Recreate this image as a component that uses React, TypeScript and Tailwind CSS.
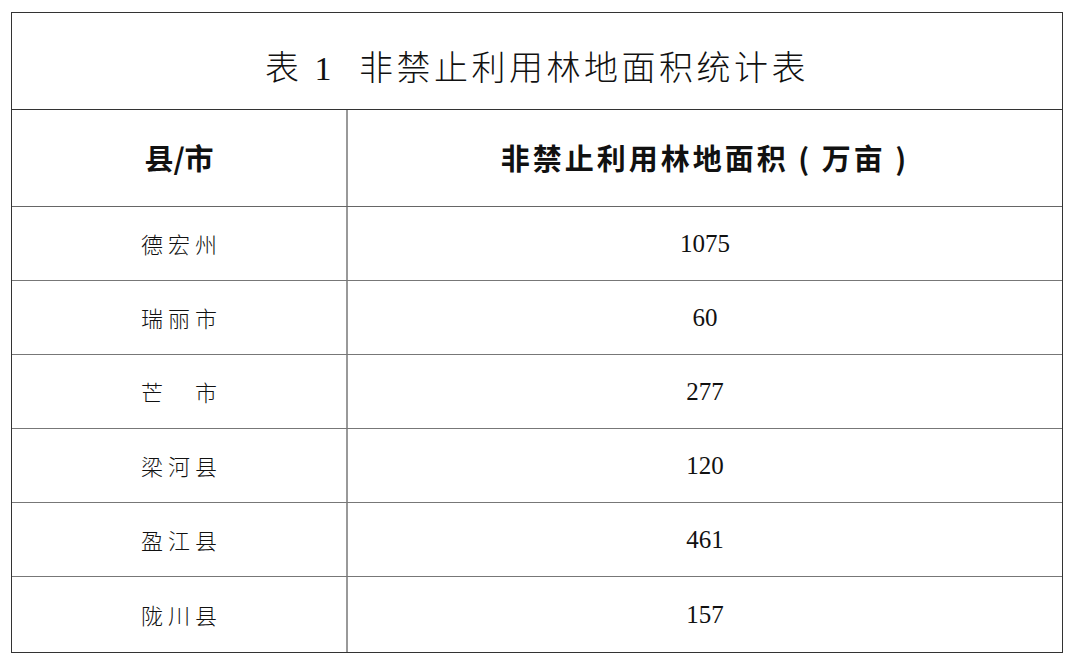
import React from "react";

const rows: { name: string; value: string }[] = [
  { name: "德宏州", value: "1075" },
  { name: "瑞丽市", value: "60" },
  { name: "芒\u3000市", value: "277" },
  { name: "梁河县", value: "120" },
  { name: "盈江县", value: "461" },
  { name: "陇川县", value: "157" },
];

const cjk = "font-['Liberation_Serif','Noto_Sans_CJK_SC',serif]";

export default function App() {
  return (
    <div className="w-[1080px] h-[672px] bg-white pt-[12px] pl-[11px]">
      <div className="w-[1052px] border-[1.5px] border-[#333]">
        {/* title */}
        <div className="h-[97px] flex items-center justify-center border-b-[1.5px] border-[#333]">
          <h1 className={`${cjk} text-[34px] font-light text-[#111] tracking-[3.5px] pt-[14px]`}>
            表 1&nbsp; 非禁止利用林地面积统计表
          </h1>
        </div>

        {/* header */}
        <div className="grid grid-cols-[336px_1fr] h-[97px] border-b-[1.5px] border-[#666]">
          <div className="flex items-center justify-center border-r-[2px] border-[#999]">
            <span className="font-['Noto_Sans_CJK_SC',sans-serif] font-bold text-[29px] text-[#111]">
              县/市
            </span>
          </div>
          <div className="flex items-center justify-center">
            <span className="font-['Noto_Sans_CJK_SC',sans-serif] font-bold text-[29px] text-[#111] tracking-[3px] whitespace-pre">
              非禁止利用林地面积 ( 万亩 )
            </span>
          </div>
        </div>

        {/* body */}
        {rows.map((r, i) => (
          <div
            key={r.name}
            className={`grid grid-cols-[336px_1fr] ${
              i === rows.length - 1 ? "h-[75px]" : "h-[74px] border-b-[1.5px] border-[#777]"
            }`}
          >
            <div className="flex items-center justify-center border-r-[2px] border-[#999]">
              <span className="font-['Noto_Sans_CJK_SC',sans-serif] font-light text-[22px] text-[#111] tracking-[5px] pl-[5px]">
                {r.name}
              </span>
            </div>
            <div className="flex items-center justify-center">
              <span className="font-['Liberation_Serif',serif] text-[25px] text-[#111]">
                {r.value}
              </span>
            </div>
          </div>
        ))}
      </div>
    </div>
  );
}
